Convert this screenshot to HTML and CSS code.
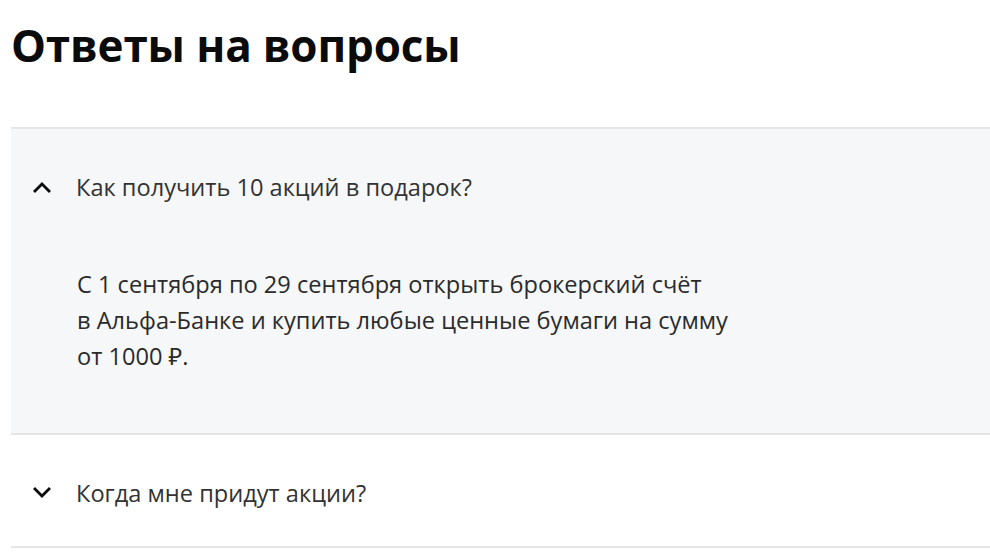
FILE: index.html
```html
<!DOCTYPE html>
<html lang="ru">
<head>
<meta charset="utf-8">
<link rel="stylesheet" href="styles.css">
</head>
<body>
<section class="faq">
  <h1 class="faq-title">Ответы на вопросы</h1>
  <div class="faq-list">
    <div class="faq-item is-open">
      <div class="faq-q">
        <svg class="chev" width="18" height="12" viewBox="0 0 18 12"><path d="M2 10 L9 3 L16 10" fill="none" stroke="#0b0b0b" stroke-width="2.8" stroke-linecap="square" stroke-linejoin="miter"/></svg>
        <span class="faq-q-text">Как получить 10 акций в подарок?</span>
      </div>
      <div class="faq-a">
        <p>С 1 сентября по 29 сентября открыть брокерский счёт<br>в Альфа-Банке и купить любые ценные бумаги на сумму<br>от 1000 ₽.</p>
      </div>
    </div>
    <div class="faq-item">
      <div class="faq-q">
        <svg class="chev" width="18" height="12" viewBox="0 0 18 12"><path d="M2 2 L9 9 L16 2" fill="none" stroke="#0b0b0b" stroke-width="2.8" stroke-linecap="square" stroke-linejoin="miter"/></svg>
        <span class="faq-q-text">Когда мне придут акции?</span>
      </div>
    </div>
  </div>
</section>
</body>
</html>
```
FILE: styles.css
```css
* { box-sizing: border-box; }
html, body { margin: 0; padding: 0; background: #fff; }
body { font-family: "Open Sans", "Noto Sans", sans-serif; color: #0b0b0b; }
.faq { padding: 0 0 0 11px; }
.faq-title {
  margin: 0;
  padding: 13px 0 0 0;
  font-size: 44px;
  line-height: 64px;
  font-weight: 700;
  letter-spacing: -0.15px;
  height: 127px;
}
.faq-list { border-top: 2px solid #e6e6e8; }
.faq-item { border-bottom: 2px solid #e6e6e8; }
.faq-item.is-open { background: #f6f7f9; }
.faq-q {
  display: flex;
  align-items: center;
  gap: 25px;
  height: 111px;
  padding: 4px 0 0 22px;
}
.chev { flex: none; display: block; }
.faq-q-text { font-size: 23.6px; color: #333; }
.faq-a { padding: 26px 0 59px 66px; }
.faq-a p {
  margin: 0;
  font-size: 23.6px;
  line-height: 36px;
  color: #2b2b2b;
}
```
